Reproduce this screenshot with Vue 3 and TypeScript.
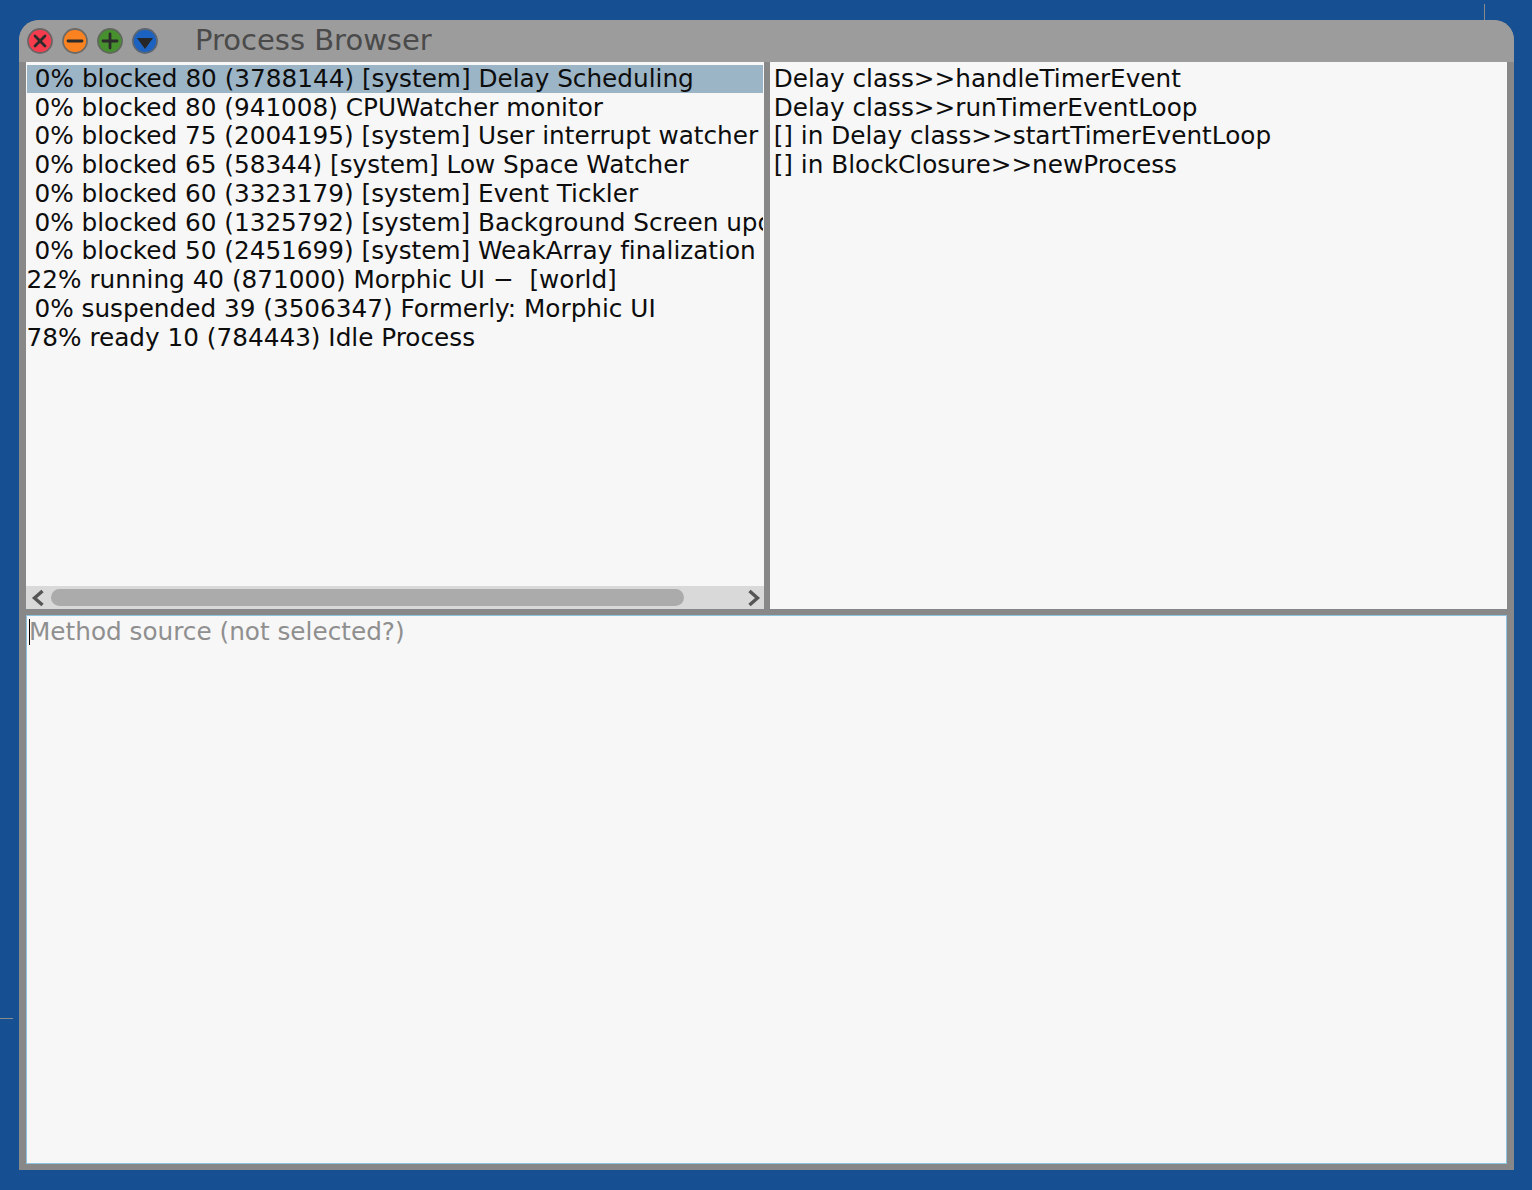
<script setup lang="ts">
const processes: { text: string; selected?: boolean }[] = [
  { text: ' 0% blocked 80 (3788144) [system] Delay Scheduling', selected: true },
  { text: ' 0% blocked 80 (941008) CPUWatcher monitor' },
  { text: ' 0% blocked 75 (2004195) [system] User interrupt watcher' },
  { text: ' 0% blocked 65 (58344) [system] Low Space Watcher' },
  { text: ' 0% blocked 60 (3323179) [system] Event Tickler' },
  { text: ' 0% blocked 60 (1325792) [system] Background Screen updater' },
  { text: ' 0% blocked 50 (2451699) [system] WeakArray finalization process' },
  { text: '22% running 40 (871000) Morphic UI −  [world]' },
  { text: ' 0% suspended 39 (3506347) Formerly: Morphic UI' },
  { text: '78% ready 10 (784443) Idle Process' },
]
const stack: string[] = [
  'Delay class>>handleTimerEvent',
  'Delay class>>runTimerEventLoop',
  '[] in Delay class>>startTimerEventLoop',
  '[] in BlockClosure>>newProcess',
]
</script>

<template>
  <div class="desktop">
    <span class="mark mark-top"></span>
    <span class="mark mark-left"></span>
    <section class="window">
      <header class="titlebar">
        <div class="buttons">
          <svg class="btn" viewBox="0 0 26 26"><circle cx="13" cy="13" r="12" fill="#f63b4c" stroke="#6e6466" stroke-width="1.800"/><path d="M8 8 18 18M18 8 8 18" stroke="#2b2b2b" stroke-width="2.800" stroke-linecap="round"/></svg>
          <svg class="btn" viewBox="0 0 26 26"><circle cx="13" cy="13" r="12" fill="#fb8220" stroke="#6e6a66" stroke-width="1.800"/><path d="M6 13H20" stroke="#2b2b2b" stroke-width="2.800" stroke-linecap="round"/></svg>
          <svg class="btn" viewBox="0 0 26 26"><circle cx="13" cy="13" r="12" fill="#46912e" stroke="#5f6a5c" stroke-width="1.800"/><path d="M6 13H20M13 6V20" stroke="#2b2b2b" stroke-width="2.800" stroke-linecap="round"/></svg>
          <svg class="btn" viewBox="0 0 26 26"><circle cx="13" cy="13" r="12" fill="#1c62c0" stroke="#5c6672" stroke-width="1.800"/><path d="M5 10H21L13 21Z" fill="#262626"/></svg>
        </div>
        <h1 class="title">Process Browser</h1>
      </header>
      <div class="panes">
        <div class="top">
          <div class="pane left">
            <ul class="list">
              <li v-for="p in processes" :key="p.text" class="row" :class="{ selected: p.selected }">{{ p.text }}</li>
            </ul>
            <div class="hscroll">
              <svg class="arrow" viewBox="0 0 14 18"><path d="M11.500 2 3.500 9 11.500 16" fill="none" stroke="#555" stroke-width="3.400"/></svg>
              <div class="track"><div class="thumb"></div></div>
              <svg class="arrow" viewBox="0 0 14 18"><path d="M2.500 2 10.500 9 2.500 16" fill="none" stroke="#555" stroke-width="3.400"/></svg>
            </div>
          </div>
          <div class="pane right">
            <div v-for="s in stack" :key="s" class="row">{{ s }}</div>
          </div>
        </div>
        <div class="source">
          <span class="caret"></span>
          <span class="placeholder">Method source (not selected?)</span>
        </div>
      </div>
    </section>
  </div>
</template>

<style>
html, body { margin: 0; background: #164f92; }
</style>

<style scoped>
.desktop {
  position: relative;
  width: 1532px;
  height: 1190px;
  box-sizing: border-box;
  padding: 20px 18px 20px 19px;
  background: #164f92;
  overflow: hidden;
  font-family: "DejaVu Sans", sans-serif;
  font-variant-ligatures: none;
}
.mark { position: absolute; background: #8a8a8a; }
.mark-top { left: 1484px; top: 4px; width: 1px; height: 16px; }
.mark-left { left: 0; top: 1018px; width: 13px; height: 1px; }
.window {
  display: flex;
  flex-direction: column;
  height: 1150px;
  background: #888888;
  border-radius: 20px 20px 0 0;
  overflow: hidden;
}
.titlebar {
  display: flex;
  align-items: center;
  height: 42px;
  flex: none;
  padding-left: 8px;
  background: #9c9c9c;
}
.buttons { display: flex; gap: 9px; }
.btn { width: 26px; height: 26px; display: block; }
.title {
  margin: 0 0 2px 37px;
  font-size: 29px;
  font-weight: 400;
  color: #4a4a4a;
  line-height: 40px;
}
.panes {
  flex: 1;
  display: flex;
  flex-direction: column;
  gap: 6px;
  padding: 0 7px 6px 7px;
  min-height: 0;
}
.top {
  display: grid;
  grid-template-columns: 738px 737px;
  gap: 6px;
  height: 547px;
  flex: none;
}
.pane { background: #f7f7f7; overflow: hidden; font-size: 24.720px; color: #0d0d0d; }
.left { display: flex; flex-direction: column; }
.list {
  flex: 1;
  margin: 0;
  padding: 2.900px 1px 0 0.600px;
  list-style: none;
  overflow: hidden;
}
.row {
  height: 28.750px;
  line-height: 28.300px;
  white-space: pre;
  overflow: hidden;
}
.selected { background: #9bb4c6; height: 28px; margin-bottom: 0.750px; margin-left: 0.400px; }
.right { padding: 2.900px 0 0 3.700px; }
.hscroll {
  flex: none;
  display: flex;
  align-items: center;
  height: 23px;
  box-sizing: border-box;
  padding: 0 3px 0 5px;
  background: #d9d9d9;
}
.arrow { width: 14px; height: 18px; flex: none; }
.track { flex: 1; height: 17px; padding: 0 57px 0 1px; box-sizing: border-box; margin-left: 5px; margin-right: 6px; }
.thumb { height: 100%; border-radius: 9px; background: #ababab; }
.source {
  flex: 1;
  position: relative;
  background: #f7f7f7;
  border: 1px solid #8cc4e0;
  padding: 2px 3px;
  font-size: 24.720px;
  line-height: 28.750px;
  color: #8f8f8f;
}
.placeholder { white-space: pre; margin-left: -1px; }
.caret {
  position: absolute;
  left: 2px;
  top: 3px;
  width: 1px;
  height: 26px;
  background: #000;
}
</style>
